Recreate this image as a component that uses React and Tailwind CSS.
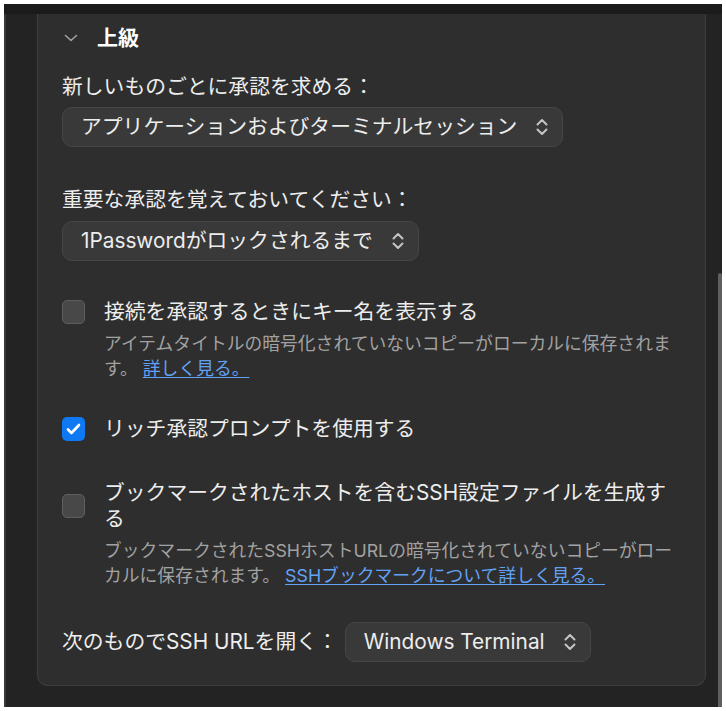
import React from 'react'
import { useState } from 'react'

function UpDown() {
  return (
    <svg width="12" height="18" viewBox="0 0 12 18" fill="none" className="shrink-0">
      <path d="M1.5 6.5 L6 2 L10.5 6.5" stroke="#c4c4c4" strokeWidth="2" strokeLinecap="round" strokeLinejoin="round" />
      <path d="M1.5 11.5 L6 16 L10.5 11.5" stroke="#c4c4c4" strokeWidth="2" strokeLinecap="round" strokeLinejoin="round" />
    </svg>
  )
}

function Select({ value }) {
  return (
    <button className="inline-flex items-center h-[40px] pl-[18px] pr-[14px] gap-[19px] rounded-[10px] bg-[#393939] border border-[#464646] text-[20.8px] leading-[28px] text-[#ededed] whitespace-nowrap">
      <span>{value}</span>
      <UpDown />
    </button>
  )
}

function Checkbox({ checked, onChange }) {
  if (checked) {
    return (
      <button onClick={onChange} className="w-[23px] h-[24px] rounded-[5px] bg-[#0f79f3] flex items-center justify-center">
        <svg width="15" height="12" viewBox="0 0 15 12" fill="none">
          <path d="M2 6.5 L5.5 10 L13 2" stroke="white" strokeWidth="2.6" strokeLinecap="round" strokeLinejoin="round" />
        </svg>
      </button>
    )
  }
  return <button onClick={onChange} className="w-[23px] h-[24px] rounded-[5px] bg-[#484848] border border-[#5e5e5e]" />
}

function CheckRow({ checked, onChange, label, children }) {
  return (
    <div className="grid grid-cols-[23px_1fr] gap-x-[19px] items-center">
      <Checkbox checked={checked} onChange={onChange} />
      <div className="text-[20.8px] leading-[26px] text-[#ededed]">{label}</div>
      {children && <div />}
      {children && (
        <div className="mt-[6px] text-[17.8px] leading-[25px] text-[#a2a2a2]">{children}</div>
      )}
    </div>
  )
}

export default function App() {
  const [checks, setChecks] = useState({ keyName: false, rich: true, sshConfig: false })
  const toggle = (k) => setChecks({ ...checks, [k]: !checks[k] })

  return (
    <div className="min-h-screen bg-white p-[4px] font-['Inter','Noto_Sans_CJK_JP',sans-serif]">
      <div className="relative h-[703px] flex flex-col bg-[#232323] overflow-hidden">
        <div className="h-[10px] shrink-0 bg-[#1b1b1b]" />
        <div className="flex-1 flex border-l-2 border-[#383838] pl-[31px]">
          <div className="w-[669px] self-start bg-[#2e2e2e] border-x border-b border-[#3d3d3d] rounded-b-[11px] pt-[10px] pl-[24px] pr-[25px] pb-[23px]">
            {/* header */}
            <div className="h-[28px] flex items-center gap-[19px] pl-[2px]">
              <svg width="14" height="8" viewBox="0 0 14 8" fill="none">
                <path d="M1.5 1.5 L7 6.5 L12.5 1.5" stroke="#a0a0a0" strokeWidth="1.6" strokeLinecap="round" strokeLinejoin="round" />
              </svg>
              <span className="text-[21px] font-bold text-white">上級</span>
            </div>

            <div className="mt-[21px] text-[20.8px] leading-[28px] text-[#ededed]">新しいものごとに承認を求める：</div>
            <div className="mt-[6px]">
              <Select value="アプリケーションおよびターミナルセッション" />
            </div>

            <div className="mt-[39px] text-[20.8px] leading-[28px] text-[#ededed]">重要な承認を覚えておいてください：</div>
            <div className="mt-[7px]">
              <Select value="1Passwordがロックされるまで" />
            </div>

            <div className="mt-[38px]">
              <CheckRow checked={checks.keyName} onChange={() => toggle('keyName')} label="接続を承認するときにキー名を表示する">
                アイテムタイトルの暗号化されていないコピーがローカルに保存されます。{' '}
                <a href="#" className="text-[#62a2f6] underline underline-offset-[2px]">詳しく見る。</a>
              </CheckRow>
            </div>

            <div className="mt-[35px]">
              <CheckRow checked={checks.rich} onChange={() => toggle('rich')} label="リッチ承認プロンプトを使用する" />
            </div>

            <div className="mt-[38px]">
              <CheckRow checked={checks.sshConfig} onChange={() => toggle('sshConfig')} label="ブックマークされたホストを含むSSH設定ファイルを生成する">
                ブックマークされたSSHホストURLの暗号化されていないコピーがローカルに保存されます。{' '}
                <a href="#" className="text-[#62a2f6] underline underline-offset-[2px]">SSHブックマークについて詳しく見る。</a>
              </CheckRow>
            </div>

            <div className="mt-[34px] flex items-center gap-[7px]">
              <span className="text-[20.8px] leading-[28px] text-[#ededed]">次のものでSSH URLを開く：</span>
              <Select value="Windows Terminal" />
            </div>
          </div>
        </div>
        <div className="absolute right-0 top-[269px] bottom-0 w-[4px] rounded-t-full bg-[#5f5f5f]" />
      </div>
    </div>
  )
}
